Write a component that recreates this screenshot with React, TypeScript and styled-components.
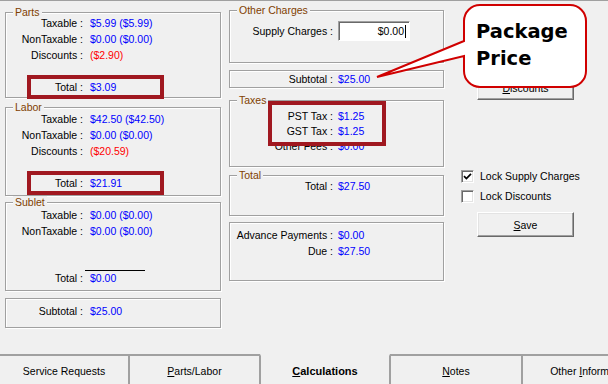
import React from 'react';
import styled, { createGlobalStyle, css } from 'styled-components';

type Tone = 'blue' | 'red';

const GlobalStyle = createGlobalStyle`
    html, body {
        margin: 0;
        padding: 0;
        background: #f0f0f0;
    }
    body {
        font-family: 'Liberation Sans', Arial, sans-serif;
        font-size: 10.5px;
        color: #000;
    }
`;

const Window = styled.div`
    position: relative;
    width: 608px;
    height: 384px;
    display: flex;
    flex-direction: column;
    overflow: hidden;
    background: #f0f0f0;
`;

const TopRule = styled.div`
    flex-shrink: 0;
    height: 1px;
    background: #a0a0a0;
`;

const Page = styled.div`
    flex: 1;
    display: grid;
    grid-template-columns: 216px 215px 1fr;
    column-gap: 8px;
    align-items: start;
    padding-left: 5px;
`;

const Column = styled.div`
    display: flex;
    flex-direction: column;
`;

const Group = styled.div<{ $mt: number; $h: number; $pt: number; $pb?: number }>`
    position: relative;
    box-sizing: border-box;
    display: flex;
    flex-direction: column;
    margin-top: ${(p) => p.$mt}px;
    height: ${(p) => p.$h}px;
    padding-top: ${(p) => p.$pt}px;
    padding-bottom: ${(p) => p.$pb ?? 0}px;
    border: 1px solid #a0a0a0;
    box-shadow: inset 1px 1px 0 #fff, 1px 1px 0 #fff;
`;

const Legend = styled.span`
    position: absolute;
    top: -7px;
    left: 7px;
    padding: 0 2px;
    line-height: 13px;
    background: #f0f0f0;
    color: #804000;
`;

const Row = styled.div<{ $lh?: number; $push?: boolean }>`
    display: grid;
    grid-template-columns: 77px 1fr;
    column-gap: 7px;
    align-items: center;
    line-height: ${(p) => p.$lh ?? 16}px;
    white-space: nowrap;
    margin-top: ${(p) => (p.$push ? 'auto' : '0')};
`;

const MidRow = styled(Row)`
    grid-template-columns: 103px 1fr;
    column-gap: 5px;
`;

const Label = styled.span`
    text-align: right;
`;

const Value = styled.span<{ $tone?: Tone; $ruled?: boolean }>`
    position: relative;
    color: ${(p) => (p.$tone === 'red' ? '#ff0000' : '#0000ff')};
    ${(p) =>
        p.$ruled &&
        css`
            &::before {
                content: '';
                position: absolute;
                top: 0;
                left: -5px;
                width: 60px;
                height: 1px;
                background: #000;
            }
        `}
`;

const Marker = styled.div<{ $x: number; $y: number; $w: number; $h: number }>`
    position: absolute;
    left: ${(p) => p.$x}px;
    top: ${(p) => p.$y}px;
    width: ${(p) => p.$w}px;
    height: ${(p) => p.$h}px;
    box-sizing: border-box;
    border: 4px solid #a01820;
    pointer-events: none;
`;

const TextBox = styled.div`
    box-sizing: border-box;
    width: 72px;
    height: 20px;
    padding-right: 3px;
    line-height: 18px;
    text-align: right;
    background: #fff;
    border: 1px solid;
    border-color: #a0a0a0 #fff #fff #a0a0a0;
    box-shadow: inset 1px 1px 0 #696969;
`;

const Caret = styled.span`
    display: inline-block;
    width: 1px;
    height: 13px;
    margin-left: 1px;
    vertical-align: -3px;
    background: #000;
`;

const Button = styled.button<{ $mt: number }>`
    box-sizing: border-box;
    width: 97px;
    height: 25px;
    margin: ${(p) => p.$mt}px 0 0 25px;
    padding: 0;
    font: inherit;
    color: #000;
    background: #f0f0f0;
    border: 1px solid;
    border-color: #fff #696969 #696969 #fff;
    box-shadow: inset -1px -1px 0 #a0a0a0, inset 1px 1px 0 #e3e3e3;
`;

const Key = styled.span`
    text-decoration: underline;
`;

const CheckRow = styled.label<{ $mt: number }>`
    display: flex;
    align-items: center;
    gap: 6px;
    margin: ${(p) => p.$mt}px 0 0 9px;
    line-height: 16px;
    white-space: nowrap;
`;

const Box = styled.span`
    box-sizing: border-box;
    display: flex;
    align-items: center;
    justify-content: center;
    width: 13px;
    height: 13px;
    background: #fff;
    border: 1px solid;
    border-color: #a0a0a0 #fff #fff #a0a0a0;
    box-shadow: inset 1px 1px 0 #696969, inset -1px -1px 0 #e3e3e3;
`;

const Callout = styled.svg`
    position: absolute;
    left: 370px;
    top: 0;
`;

const CalloutText = styled.div`
    position: absolute;
    left: 476px;
    top: 18px;
    font-family: 'DejaVu Sans', 'Liberation Sans', sans-serif;
    font-weight: bold;
    font-size: 19.5px;
    line-height: 27px;
    color: #000;
`;

const TabStrip = styled.div`
    flex-shrink: 0;
    display: flex;
    height: 30px;
    margin-left: -1px;
`;

const Tab = styled.div<{ $w: number; $active?: boolean }>`
    box-sizing: border-box;
    flex-shrink: 0;
    width: ${(p) => p.$w}px;
    padding-top: 2px;
    line-height: 26px;
    text-align: center;
    white-space: nowrap;
    overflow: hidden;
    border-left: 1px solid #a0a0a0;
    border-right: 1px solid #a0a0a0;
    border-top: 2px solid ${(p) => (p.$active ? 'transparent' : '#a0a0a0')};
    font-weight: ${(p) => (p.$active ? 'bold' : 'normal')};
    font-size: ${(p) => (p.$active ? '11px' : '10.5px')};
`;

const parts = [
    { label: 'Taxable :', value: '$5.99 ($5.99)' },
    { label: 'NonTaxable :', value: '$0.00 ($0.00)' },
    { label: 'Discounts :', value: '($2.90)', tone: 'red' as Tone },
];

const labor = [
    { label: 'Taxable :', value: '$42.50 ($42.50)' },
    { label: 'NonTaxable :', value: '$0.00 ($0.00)' },
    { label: 'Discounts :', value: '($20.59)', tone: 'red' as Tone },
];

const taxes = [
    { label: 'PST Tax :', value: '$1.25' },
    { label: 'GST Tax :', value: '$1.25' },
    { label: 'Other Fees :', value: '$0.00' },
];

const Check = () => (
    <svg width="9" height="9" viewBox="0 0 9 9">
        <path d="M1 4.2 L3.4 6.6 L8 1.8" fill="none" stroke="#000" strokeWidth="1.7" />
    </svg>
);

const App: React.FC = () => {
    return (
        <Window>
            <GlobalStyle />
            <TopRule />
            <Page>
                <Column>
                    <Group $mt={11} $h={86} $pt={2} $pb={2}>
                        <Legend>Parts</Legend>
                        {parts.map((r) => (
                            <Row key={r.label}>
                                <Label>{r.label}</Label>
                                <Value $tone={r.tone}>{r.value}</Value>
                            </Row>
                        ))}
                        <Row $push>
                            <Label>Total :</Label>
                            <Value>$3.09</Value>
                        </Row>
                        <Marker $x={21} $y={62} $w={137} $h={24} />
                    </Group>

                    <Group $mt={9} $h={89} $pt={3} $pb={4}>
                        <Legend>Labor</Legend>
                        {labor.map((r) => (
                            <Row key={r.label}>
                                <Label>{r.label}</Label>
                                <Value $tone={r.tone}>{r.value}</Value>
                            </Row>
                        ))}
                        <Row $push>
                            <Label>Total :</Label>
                            <Value>$21.91</Value>
                        </Row>
                        <Marker $x={21} $y={63} $w={137} $h={24} />
                    </Group>

                    <Group $mt={6} $h={89} $pt={4} $pb={4}>
                        <Legend>Sublet</Legend>
                        <Row>
                            <Label>Taxable :</Label>
                            <Value>$0.00 ($0.00)</Value>
                        </Row>
                        <Row>
                            <Label>NonTaxable :</Label>
                            <Value>$0.00 ($0.00)</Value>
                        </Row>
                        <Row $push>
                            <Label>Total :</Label>
                            <Value $ruled>$0.00</Value>
                        </Row>
                    </Group>

                    <Group $mt={7} $h={30} $pt={4}>
                        <Row>
                            <Label>Subtotal :</Label>
                            <Value>$25.00</Value>
                        </Row>
                    </Group>
                </Column>

                <Column>
                    <Group $mt={9} $h={53} $pt={10}>
                        <Legend>Other Charges</Legend>
                        <MidRow $lh={20}>
                            <Label>Supply Charges :</Label>
                            <TextBox>
                                $0.00
                                <Caret />
                            </TextBox>
                        </MidRow>
                    </Group>

                    <Group $mt={7} $h={18} $pt={0}>
                        <MidRow>
                            <Label>Subtotal :</Label>
                            <Value>$25.00</Value>
                        </MidRow>
                    </Group>

                    <Group $mt={12} $h={67} $pt={8}>
                        <Legend>Taxes</Legend>
                        {taxes.map((r) => (
                            <MidRow key={r.label} $lh={15}>
                                <Label>{r.label}</Label>
                                <Value>{r.value}</Value>
                            </MidRow>
                        ))}
                        <Marker $x={38} $y={0} $w={118} $h={45} />
                    </Group>

                    <Group $mt={8} $h={41} $pt={2}>
                        <Legend>Total</Legend>
                        <MidRow>
                            <Label>Total :</Label>
                            <Value>$27.50</Value>
                        </MidRow>
                    </Group>

                    <Group $mt={6} $h={59} $pt={4}>
                        <MidRow>
                            <Label>Advance Payments :</Label>
                            <Value>$0.00</Value>
                        </MidRow>
                        <MidRow>
                            <Label>Due :</Label>
                            <Value>$27.50</Value>
                        </MidRow>
                    </Group>
                </Column>

                <Column>
                    <Button $mt={74}>
                        <Key>D</Key>iscounts
                    </Button>
                    <CheckRow $mt={68}>
                        <Box>
                            <Check />
                        </Box>
                        Lock Supply Charges
                    </CheckRow>
                    <CheckRow $mt={4}>
                        <Box />
                        Lock Discounts
                    </CheckRow>
                    <Button $mt={8}>
                        <Key>S</Key>ave
                    </Button>
                </Column>
            </Page>

            <TabStrip>
                <Tab $w={130}>Service Requests</Tab>
                <Tab $w={131}>
                    <Key>P</Key>arts/Labor
                </Tab>
                <Tab $w={130} $active>
                    <Key>C</Key>alculations
                </Tab>
                <Tab $w={132}>
                    <Key>N</Key>otes
                </Tab>
                <Tab $w={138}>
                    Other <Key>I</Key>nformation
                </Tab>
            </TabStrip>

            <Callout width="222" height="95" viewBox="370 0 222 95">
                <path
                    d="M480 5 H570 A16 16 0 0 1 586 21 V71 A16 16 0 0 1 570 87 H480 A16 16 0 0 1 464 71 V56 L377 77 L464 41 V21 A16 16 0 0 1 480 5 Z"
                    fill="#fff"
                    stroke="#d00000"
                    strokeWidth="2"
                />
            </Callout>
            <CalloutText>
                Package
                <br />
                Price
            </CalloutText>
        </Window>
    );
};

export default App;
